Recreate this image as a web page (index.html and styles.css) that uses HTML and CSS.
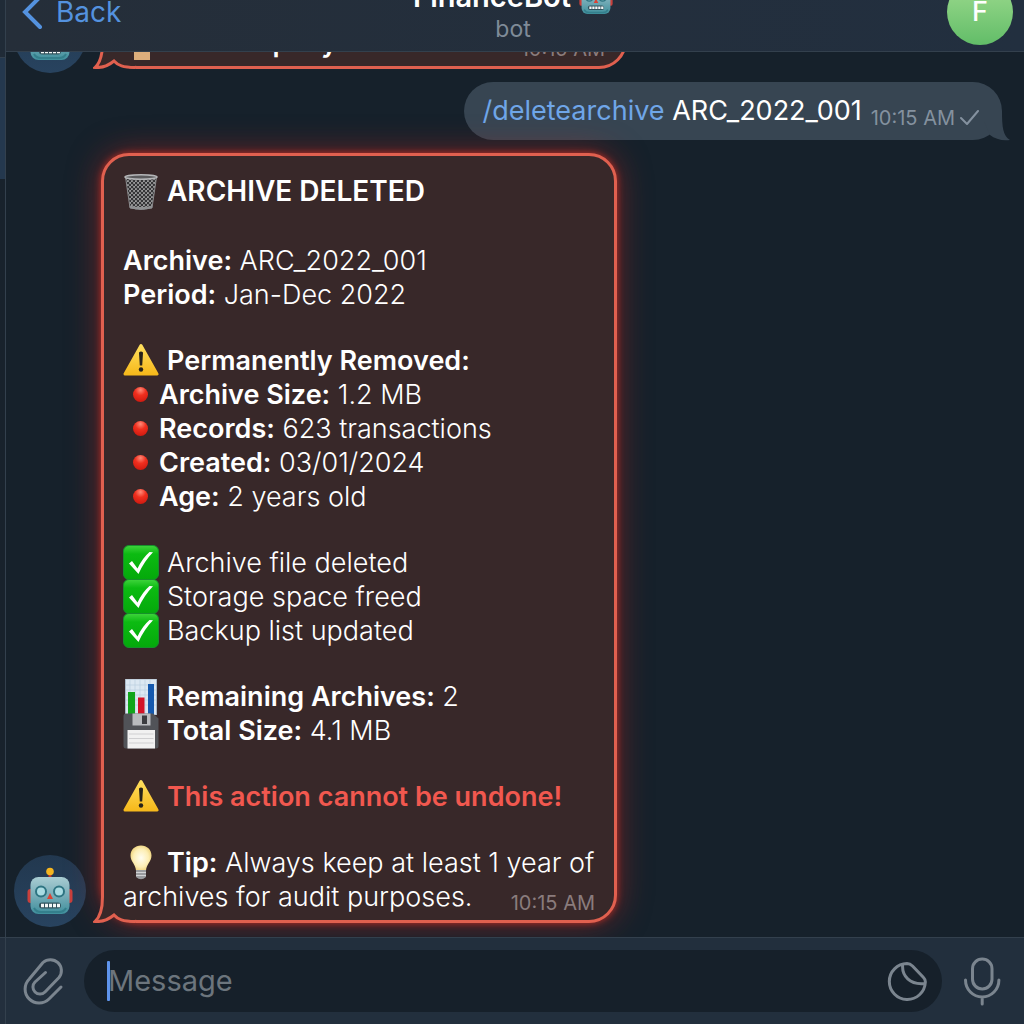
FILE: index.html
```html
<!DOCTYPE html>
<html lang="en">
<head>
<meta charset="utf-8">
<meta name="viewport" content="width=device-width, initial-scale=1">
<title>FinanceBot</title>
<link rel="stylesheet" href="styles.css">
</head>
<body>
<svg class="defs" aria-hidden="true">
  <defs>
    <linearGradient id="g-face" x1="0" y1="0" x2="0" y2="1"><stop offset="0" stop-color="#a9cdd3"/><stop offset=".5" stop-color="#78adb8"/><stop offset="1" stop-color="#3f8f9c"/></linearGradient>
    <linearGradient id="g-warn" x1="0" y1="0" x2="0" y2="1"><stop offset="0" stop-color="#ffdf5c"/><stop offset="1" stop-color="#f6b91c"/></linearGradient>
    <linearGradient id="g-ok" x1="0" y1="0" x2="0" y2="1"><stop offset="0" stop-color="#3fd43c"/><stop offset=".25" stop-color="#0cbb12"/><stop offset="1" stop-color="#04a90b"/></linearGradient>
    <radialGradient id="g-dot" cx=".5" cy=".2" r=".8"><stop offset="0" stop-color="#ff8a78"/><stop offset=".45" stop-color="#f0301f"/><stop offset="1" stop-color="#cf1a10"/></radialGradient>
    <radialGradient id="g-bulb" cx=".5" cy=".5" r=".6"><stop offset="0" stop-color="#fffdf0"/><stop offset=".6" stop-color="#fdeeb4"/><stop offset="1" stop-color="#e8c86a"/></radialGradient>
    <pattern id="p-mesh" width="4" height="4" patternUnits="userSpaceOnUse"><rect width="4" height="4" fill="#9a9a9b"/><circle cx="1" cy="1" r="1.3" fill="#353537"/><circle cx="3" cy="3" r="1.3" fill="#353537"/></pattern>
  </defs>
  <symbol id="robot" viewBox="0 0 46 48">
    <path d="M23 5v8" stroke="#c0392b" stroke-width="3"/>
    <circle cx="23" cy="4.500" r="3.800" fill="#f5b51f"/>
    <rect x="0.500" y="22" width="6" height="14" rx="3" fill="#c9403c"/>
    <rect x="39.500" y="22" width="6" height="14" rx="3" fill="#c9403c"/>
    <rect x="3.500" y="10" width="39" height="37" rx="8" fill="url(#g-face)"/>
    <path d="M7 41q2 4 7 4h18q5 0 7-4" fill="none" stroke="#347f8c" stroke-width="2"/>
    <circle cx="14" cy="24.500" r="5" fill="#a9dbe2" stroke="#2e7482" stroke-width="2"/>
    <circle cx="32" cy="24.500" r="5" fill="#a9dbe2" stroke="#2e7482" stroke-width="2"/>
    <path d="M23 26l3 6h-6z" fill="#dc4334"/>
    <rect x="12" y="35.500" width="22" height="6" rx="3" fill="#31535d"/>
    <path d="M14 38.500h19" stroke="#f4f7f7" stroke-width="3.500" stroke-dasharray="3 1"/>
  </symbol>
  <symbol id="trash" viewBox="0 0 36 36">
    <path d="M2.500 3L7 34q11 3 22 0L33.500 3z" fill="url(#p-mesh)" stroke="#88898b"/>
    <path d="M6.500 31.500L7 34q11 3 22 0l.5-2.500q-11.500 3-23 0z" fill="#8f9092"/>
    <ellipse cx="18" cy="3" rx="16" ry="2.200" fill="#5b5b5d" stroke="#b5b6b8" stroke-width="1.500"/>
  </symbol>
  <symbol id="warning" viewBox="0 0 36 36">
    <path d="M18 2.500L34 31H2z" fill="url(#g-warn)" stroke="url(#g-warn)" stroke-width="3" stroke-linejoin="round"/>
    <path d="M16 9.500q2-2 4 0l-.8 13h-2.400z" fill="#27231a"/><circle cx="18" cy="26.500" r="2.200" fill="#27231a"/>
  </symbol>
  <symbol id="check" viewBox="0 0 36 36">
    <rect x=".5" y=".5" width="35" height="34" rx="5.500" fill="url(#g-ok)" stroke="#16912b"/>
    <path d="M6 18.500l3-2.500 5.500 7.500Q19.500 13 26.500 7l3.500 .3Q21 16.500 15.500 29z" fill="#fff"/>
  </symbol>
  <symbol id="dot" viewBox="0 0 36 36"><circle cx="17.500" cy="17.500" r="7.500" fill="url(#g-dot)"/></symbol>
  <symbol id="chart" viewBox="0 0 36 36">
    <path d="M2.500 0h31v36h-31z" fill="#dce8f2" stroke="#a9b8c6"/>
    <path d="M7 0v35M12 0v35M17 0v35M22 0v35M27 0v35M3 6h30M3 11h30M3 16h30M3 21h30M3 26h30" stroke="#bacfe0" stroke-width=".7"/>
    <path d="M5 13h7v23H5z" fill="#12a51b"/><path d="M15 18.500h6.500V36H15z" fill="#d31327"/><path d="M25 5h6v31h-6z" fill="#1559ae"/>
  </symbol>
  <symbol id="floppy" viewBox="0 0 36 36">
    <path d="M3 .5h27l5.500 5V33q0 2.500-2.500 2.500H3Q.5 35.500.5 33V3Q.5 .5 3 .5z" fill="#515358"/>
    <path d="M9.500 .5h18v12h-18z" fill="#b9bbbe"/><path d="M19 2.500h5v8.500h-5z" fill="#3b3c40"/>
    <path d="M4.500 17h27.500v18.500H4.500z" fill="#f1f1f1"/><path d="M6 21h24.500M6 25.500h24.500M6 30h24.500" stroke="#cfcfd1"/>
  </symbol>
  <symbol id="bulb" viewBox="0 0 36 36">
    <path d="M18 .5c6 0 10.500 4.200 10.500 10 0 6-5 8.500-5.500 15H13C12.500 19 7.500 16.500 7.500 10.500 7.500 4.700 12 .5 18 .5z" fill="url(#g-bulb)"/>
    <path d="M13 25h10v7q-5 4.500-10 0z" fill="#999b9e"/><path d="M13 27.500h10M13 30.500h10" stroke="#d2d3d5"/>
  </symbol>
  <symbol id="clipboard" viewBox="0 0 36 36"><path d="M11 2h16v33H11z" fill="#dcae7c"/><path d="M14 6h10v14H14z" fill="#f2f2f2"/></symbol>
  <symbol id="tail-in" viewBox="0 0 42 38">
    <path class="tail-fill" d="M10 0V12C10 24 7 32 2 36.500C9 37 15 35 21 30C25 34.500 30 36.500 42 36.500V0z"/>
    <path class="tail-line" d="M9.500 0V12C9.500 25 7 32 2 36.500C9 37 15 35 21 30C25 34.500 30 36.500 42 36.500"/>
  </symbol>
</svg>

<div class="app">
  <aside class="rail" aria-label="Chats">
    <div class="rail-top"></div>
    <div class="rail-active"></div>
    <div class="rail-rest"></div>
    <div class="rail-foot"></div>
  </aside>

  <main class="chat">
    <header class="topbar">
      <a class="back" href="#">
        <svg width="24" height="36" viewBox="0 0 24 36" fill="none" stroke="currentColor" stroke-width="4" stroke-linecap="round"><path d="M19 3L4 18l15 15"/></svg>
        <span>Back</span>
      </a>
      <div class="peer">
        <h1>FinanceBot <svg width="34" height="36"><use href="#robot"/></svg></h1>
        <p>bot</p>
      </div>
      <button class="profile" type="button" aria-label="Profile">F</button>
    </header>

    <section class="messages">
      <div class="row">
        <div class="avatar"><svg width="46" height="48"><use href="#robot"/></svg></div>
        <article class="card card-wide">
          <p><svg class="emoji"><use href="#clipboard"/></svg><b>For company</b><time>10:15 AM</time></p>
          <svg class="tail"><use href="#tail-in"/></svg>
        </article>
      </div>

      <div class="row row-out">
        <article class="bubble">
          <span><a href="#">/deletearchive</a> ARC_2022_001</span>
          <time>10:15 AM</time>
          <svg class="sent" width="20" height="16" viewBox="0 0 20 16" fill="none" stroke="currentColor" stroke-width="2" stroke-linecap="round" stroke-linejoin="round"><path d="M1 8l6 6L18 1"/></svg>
          <svg class="tail-out" viewBox="0 0 36 30"><path d="M28 0C28 16 29 25 36 29C28 30 21 28 16 24L10 10V0z" fill="currentColor"/></svg>
        </article>
      </div>

      <div class="row">
        <div class="avatar"><svg width="46" height="48"><use href="#robot"/></svg></div>
        <article class="card card-glow">
          <h2><svg class="emoji"><use href="#trash"/></svg>ARCHIVE DELETED</h2>
          <p><b>Archive:</b> ARC_2022_001<br><b>Period:</b> Jan-Dec 2022</p>
          <div class="block">
            <h3><svg class="emoji"><use href="#warning"/></svg>Permanently Removed:</h3>
            <ul class="dots">
              <li><svg class="emoji"><use href="#dot"/></svg><b>Archive Size:</b> 1.2 MB</li>
              <li><svg class="emoji"><use href="#dot"/></svg><b>Records:</b> 623 transactions</li>
              <li><svg class="emoji"><use href="#dot"/></svg><b>Created:</b> 03/01/2024</li>
              <li><svg class="emoji"><use href="#dot"/></svg><b>Age:</b> 2 years old</li>
            </ul>
          </div>
          <ul>
            <li><svg class="emoji"><use href="#check"/></svg>Archive file deleted</li>
            <li><svg class="emoji"><use href="#check"/></svg>Storage space freed</li>
            <li><svg class="emoji"><use href="#check"/></svg>Backup list updated</li>
          </ul>
          <ul>
            <li><svg class="emoji"><use href="#chart"/></svg><b>Remaining Archives:</b> 2</li>
            <li><svg class="emoji"><use href="#floppy"/></svg><b>Total Size:</b> 4.1 MB</li>
          </ul>
          <p class="danger"><svg class="emoji"><use href="#warning"/></svg><b>This action cannot be undone!</b></p>
          <p><svg class="emoji"><use href="#bulb"/></svg><b>Tip:</b> Always keep at least 1 year of archives for audit purposes.<time>10:15 AM</time></p>
          <svg class="tail"><use href="#tail-in"/></svg>
        </article>
      </div>
    </section>

    <form class="composer">
      <button type="button" aria-label="Attach file">
        <svg width="42" height="50" viewBox="0 0 42 50"><path d="M39 31L27 43A14 14 0 0 1 7.300 23L21 6.500A11 11 0 0 1 37 21.500L23 36A7 7 0 0 1 13 26L23.500 16.500"/></svg>
      </button>
      <div class="field">
        <span class="caret"></span>
        <input type="text" placeholder="Message" aria-label="Message">
        <button type="button" aria-label="Stickers">
          <svg width="40" height="40" viewBox="0 0 40 40"><path d="M20 2.500C22.500 2.500 24 3.500 25.500 5L36.500 16.500C38 18 38.500 19.500 38.300 21.500A18 18 0 1 1 20 2.500M15.700 3.500C14.500 15 23 24 37.500 22.500"/></svg>
        </button>
      </div>
      <button type="button" aria-label="Record voice message">
        <svg width="40" height="50" viewBox="0 0 40 50"><rect x="10.500" y="3" width="19.500" height="30" rx="9.700"/><path d="M3.500 24a16.700 17 0 0 0 33.400 0M20.200 41v7"/></svg>
      </button>
    </form>
  </main>
</div>
</body>
</html>
```

FILE: styles.css
```css
:root {
  --bg: #16212b;
  --bar: #232f3d;
  --line: #33404d;
  --card: #382829;
  --red: #e0604f;
  --blue: #5492df;
  --muted: #7f8b98;
}

* { box-sizing: border-box; }

body, h1, h2, h3, p, ul { margin: 0; padding: 0; }

body {
  background: var(--bg);
  color: #fff;
  font: 400 27px/34px Inter, "Liberation Sans", sans-serif;
}

button, input { font: inherit; color: inherit; border: 0; background: none; padding: 0; }
a { color: inherit; text-decoration: none; }
ul { list-style: none; }
svg { display: block; flex: none; }
.defs { position: absolute; width: 0; height: 0; }

.app { display: flex; height: 100vh; overflow: hidden; }

.rail {
  flex: none;
  width: 6px;
  display: flex;
  flex-direction: column;
  border-right: 1px solid var(--line);
}
.rail-top { height: 58px; background: #202b37; border-bottom: 1px solid var(--line); }
.rail-active { height: 121px; background: #24384e; }
.rail-rest { flex: 1; background: #18222c; }
.rail-foot { height: 87px; background: var(--bar); border-top: 1px solid var(--line); }

.chat { flex: 1; min-width: 0; display: flex; flex-direction: column; }

.topbar {
  flex: none;
  height: 52px;
  overflow: hidden;
  display: grid;
  grid-template-columns: 1fr auto 1fr;
  grid-template-rows: 100%;
  align-items: end;
  padding: 0 11px 0 15px;
  background: linear-gradient(90deg, #252e39, #222f3f);
  border-bottom: 1px solid var(--line);
}
.back {
  display: flex;
  gap: 11px;
  padding-bottom: 21px;
  color: var(--blue);
  font-size: 28px;
  line-height: 36px;
}
.peer { padding: 0 8px 8px 0; text-align: center; }
.peer h1 {
  display: flex;
  gap: 8px;
  font-size: 29px;
  line-height: 36px;
  font-weight: 600;
}
.peer p { font-size: 23px; line-height: 28px; color: var(--muted); }
.profile {
  justify-self: end;
  width: 66px;
  height: 66px;
  margin-bottom: 6px;
  border-radius: 50%;
  background: linear-gradient(#a0dc90, #62bd68);
  font-weight: 500;
}

.messages {
  flex: 1;
  min-height: 0;
  overflow: hidden;
  display: flex;
  flex-direction: column;
  justify-content: flex-end;
  gap: 13px;
  padding: 0 22px 14px 8px;
}
.row { flex: none; display: flex; align-items: flex-end; gap: 15px; }
.row-out { justify-content: flex-end; }

.avatar {
  flex: none;
  width: 72px;
  height: 72px;
  margin-bottom: -4px;
  display: grid;
  place-items: center;
  border-radius: 50%;
  background: linear-gradient(#22384f, #28435f);
}

.card {
  position: relative;
  isolation: isolate;
  max-width: 516px;
  display: flex;
  flex-direction: column;
  gap: 32px;
  padding: 18px 19px 6px;
  font-weight: 300;
  background: var(--card);
  border: 3px solid var(--red);
  border-radius: 28px 28px 28px 36px;
}
.card-wide { width: 526px; max-width: none; }
.card-glow { box-shadow: 0 0 7px rgba(224, 50, 36, .75), 0 0 32px rgba(210, 40, 30, .5); }
.card h2, .card h3, .card b { font-weight: 600; }
.card h2 { margin-bottom: 4px; font-size: 28px; line-height: 34px; }
.card h3 { font-size: 27px; line-height: 34px; }
.card time { float: right; margin: 6px 0 -6px; color: #8a7c7d; }
.danger { color: #f1584f; }

time { font-size: 20px; font-weight: 400; }

.emoji {
  display: inline-block;
  width: 36px;
  height: 36px;
  margin: -4px 8px -4px 0;
  vertical-align: -5px;
}
.dots .emoji { margin-right: 0; }

.tail { position: absolute; z-index: -1; left: -11px; bottom: -3px; width: 42px; height: 38px; }
.tail-fill { fill: var(--card); }
.tail-line { fill: none; stroke: var(--red); stroke-width: 3px; stroke-linejoin: miter; }

.bubble {
  position: relative;
  isolation: isolate;
  display: flex;
  align-items: center;
  height: 58px;
  padding: 0 22px 0 19px;
  border-radius: 29px;
  background: #374552;
}
.bubble a { color: #6fa6e8; }
.bubble time { margin: 14px 5px 0 9px; color: #84919f; }
.sent { margin-top: 14px; color: #84919f; }
.tail-out { position: absolute; z-index: -1; right: -8px; bottom: -1px; width: 36px; height: 30px; color: #374552; }

.composer {
  position: relative;
  flex: none;
  height: 87px;
  display: flex;
  align-items: center;
  gap: 20px;
  padding: 0 22px 0 16px;
  background: #222f3d;
  border-top: 1px solid var(--line);
}
.composer svg {
  fill: none;
  stroke: #7b858f;
  stroke-width: 3px;
  stroke-linecap: round;
  stroke-linejoin: round;
}
.field {
  flex: 1;
  min-width: 0;
  height: 62px;
  display: flex;
  align-items: center;
  padding: 0 15px 0 23px;
  border-radius: 31px;
  background: #16202a;
}
.caret { width: 3px; height: 40px; margin-right: -2px; border-radius: 1px; background: #5f94ec; }
.field input { flex: 1; min-width: 0; font-size: 29px; line-height: 40px; outline: 0; }
.field input::placeholder { color: #6c757d; opacity: 1; }
```
